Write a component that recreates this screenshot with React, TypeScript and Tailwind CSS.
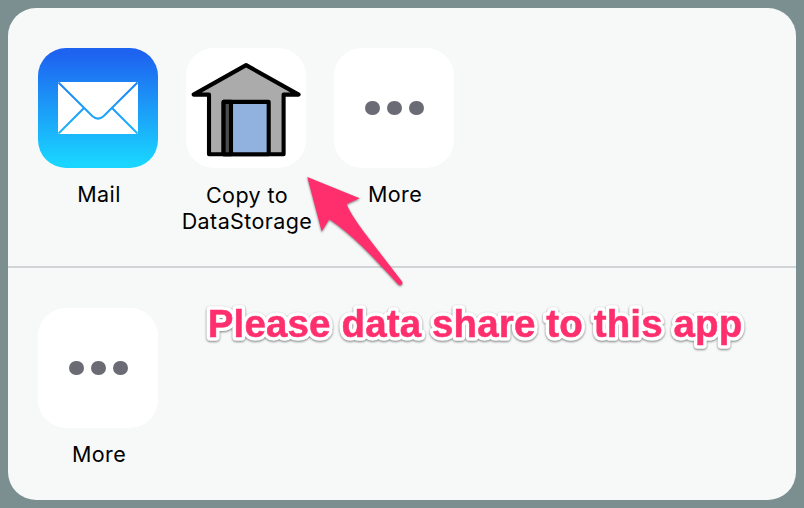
import type { ReactNode } from "react";

function AppTile({ label, labelClass = "pt-[13px]", className = "bg-white", children }: { label: ReactNode; labelClass?: string; className?: string; children: ReactNode }) {
  return (
    <div className="flex w-[120px] shrink-0 flex-col items-center">
      <div className={`h-[120px] w-[120px] overflow-hidden rounded-[28px] ${className}`}>{children}</div>
      <div className={`pl-[2px] text-center text-[21.5px] leading-[26px] tracking-[0.4px] whitespace-nowrap text-black ${labelClass}`}>
        {label}
      </div>
    </div>
  );
}

function MailIcon() {
  return (
    <svg viewBox="0 0 120 120" className="h-full w-full">
      <defs>
        <linearGradient id="mail" x1="0" y1="0" x2="0" y2="1">
          <stop offset="0.04" stopColor="#1e62f0" />
          <stop offset="0.96" stopColor="#19d5ff" />
        </linearGradient>
        <linearGradient id="mail-lines" gradientUnits="userSpaceOnUse" x1="0" y1="5" x2="0" y2="115">
          <stop stopColor="#1e62f0" />
          <stop offset="1" stopColor="#19d5ff" />
        </linearGradient>
      </defs>
      <rect width="120" height="120" fill="url(#mail)" />
      <rect x="20" y="34" width="80" height="52" rx="1" fill="#fff" />
      <g fill="none" stroke="url(#mail-lines)" strokeWidth="2">
        <path d="M20.5 34.5 L54.5 68.2 Q60 73 65.5 68.2 L99.5 34.5" />
        <path d="M20.5 85.5 L46 60 M99.5 85.5 L74 60" />
      </g>
    </svg>
  );
}

function StorageIcon() {
  return (
    <svg viewBox="0 0 120 120" className="h-full w-full">
      <g stroke="#000" strokeWidth="4.1" strokeLinejoin="round">
        <path d="M60.1 17.1 L112.6 46.6 H97.6 V106.3 H23 V46.6 H7.6 Z" fill="#ababab" />
        <path d="M37.6 106.3 V53.9 H82.7 V106.3 Z" fill="#91b1de" />
        <path d="M37.6 106.3 V53.9 H45 V106.3 Z" fill="#4d4d4d" />
      </g>
    </svg>
  );
}

function MoreIcon() {
  return (
    <div className="flex h-full items-center justify-center gap-[7.6px] pl-px">
      <span className="h-[14.4px] w-[14.4px] rounded-full bg-[#6b6b75]" />
      <span className="h-[14.4px] w-[14.4px] rounded-full bg-[#6b6b75]" />
      <span className="h-[14.4px] w-[14.4px] rounded-full bg-[#6b6b75]" />
    </div>
  );
}

export default function App() {
  return (
    <div className="relative h-[508px] w-[804px] overflow-hidden bg-[#7c8f90] p-2 font-['Inter','Liberation_Sans',sans-serif]">
      <main className="flex h-[492px] flex-col overflow-hidden rounded-[28px] bg-[#f7f9f9]">
        <section className="flex h-[258px] gap-7 px-[30px] pt-10">
          <AppTile label="Mail"><MailIcon /></AppTile>
          <AppTile label={<>Copy to<br />DataStorage</>} labelClass="pt-[14px]"><StorageIcon /></AppTile>
          <AppTile label="More"><MoreIcon /></AppTile>
        </section>
        <hr className="h-[2px] border-0 bg-[#d2d5d8]" />
        <section className="flex px-[30px] pt-10">
          <AppTile label="More"><MoreIcon /></AppTile>
        </section>
      </main>
      <svg viewBox="0 0 110 120" className="absolute top-[170px] left-[300px] h-[120px] w-[110px] drop-shadow-[0_1px_1px_rgba(0,0,0,0.5)]">
        <path d="M7.3 7 L59.7 28.2 L46.7 34 C49 42 61 58 70 70 L102 111.5 Q103.3 114 101 115 Q99 115.8 97.3 113.5 C86 101 74 88 61.7 76 Q45 60 29.3 49.3 L21.7 61.5 Z" fill="#ff2f6e" />
      </svg>
      <svg viewBox="0 0 560 60" className="absolute top-[295px] left-[200px] h-[60px] w-[560px] drop-shadow-[0_1px_1px_rgba(0,0,0,0.5)]">
        <text x="7.8" y="42.3" textLength="534.5" className="fill-[#ff2f6e] stroke-white stroke-[7.4px] font-['Liberation_Sans',sans-serif] text-[38.5px] font-bold [stroke-linejoin:round]">
          Please data share to this app
        </text>
        <text x="7.8" y="42.3" textLength="534.5" className="fill-[#ff2f6e] stroke-[#ff2f6e] stroke-[0.5px] font-['Liberation_Sans',sans-serif] text-[38.5px] font-bold">
          Please data share to this app
        </text>
      </svg>
    </div>
  );
}
